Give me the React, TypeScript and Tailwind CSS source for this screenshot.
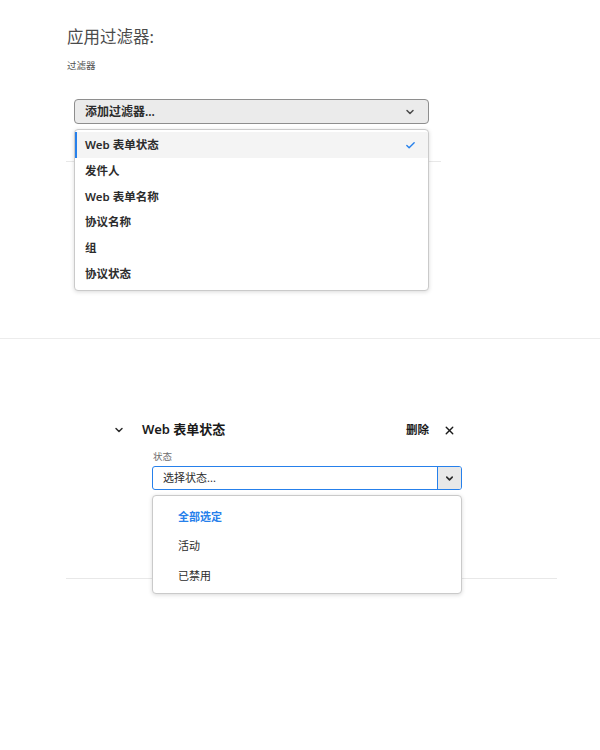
import { Check, ChevronDown, X } from "lucide-react";

const font = { fontFamily: '"Noto Sans", "Noto Sans CJK SC", sans-serif' };

const filterOptions = ["Web 表单状态", "发件人", "Web 表单名称", "协议名称", "组", "协议状态"];

function FilterMenu() {
  return (
    <div className="absolute left-[8px] top-[104px] w-[355px] rounded-[4px] border border-[#cacaca] bg-white pb-[4px] pt-[2px] shadow-[0_1px_4px_rgba(0,0,0,0.15)]">
      {filterOptions.map((opt, i) => (
        <div
          key={opt}
          className={
            i === 0
              ? "flex h-[26px] items-center justify-between border-l-2 border-[#2680eb] bg-[#f4f4f4] pl-[8px] pr-[12px]"
              : "flex h-[25.6px] items-center justify-between pl-[10px] pr-[12px]"
          }
        >
          <span className="text-[11.5px] font-semibold text-[#2c2c2c]">{opt}</span>
          {i === 0 && <Check className="h-[11px] w-[11px] text-[#2680eb]" strokeWidth={3} />}
        </div>
      ))}
    </div>
  );
}

function StatusMenu() {
  return (
    <div className="absolute left-[86px] top-[77px] w-[310px] rounded-[4px] border border-[#cacaca] bg-white pb-[2px] pt-[6px] shadow-[0_1px_4px_rgba(0,0,0,0.15)]">
      <div className="flex h-[29.5px] items-center pl-[25px] text-[11px] font-semibold text-[#2680eb]">全部选定</div>
      <div className="flex h-[29.5px] items-center pl-[25px] text-[11px] text-[#2c2c2c]">活动</div>
      <div className="flex h-[29.5px] items-center pl-[25px] text-[11px] text-[#2c2c2c]">已禁用</div>
    </div>
  );
}

export default function App() {
  return (
    <div className="min-h-[750px] bg-white" style={font}>
      <section className="pl-[66px] pt-[25px]">
        <div className="relative w-[375px] border-b border-[#e8e8e8] pb-[37px]">
          <h2 className="pl-[1px] text-[16.5px] leading-[24px] text-[#4b4b4b]">应用过滤器:</h2>
          <div className="mt-[10px] pl-[1px] text-[9.5px] leading-[14px] text-[#505050]">过滤器</div>
          <button className="ml-[8px] mt-[26px] flex h-[25px] w-[355px] items-center justify-between rounded-[4px] border border-[#8e8e8e] bg-[#ebebeb] pl-[10px] pr-[12px]">
            <span className="text-[12px] font-semibold text-[#2c2c2c]">添加过滤器...</span>
            <ChevronDown className="h-[12px] w-[12px] text-[#4b4b4b]" strokeWidth={3} />
          </button>
          <FilterMenu />
        </div>
      </section>

      <div className="mt-[176px] h-px bg-[#ececec]" />

      <section className="pl-[66px] pt-[79px]">
        <div className="relative w-[491px] border-b border-[#e8e8e8] pb-[88px]">
          <div className="flex h-[24px] items-center pl-[47px] pr-[101px]">
            <ChevronDown className="h-[12px] w-[12px] text-[#2c2c2c]" strokeWidth={3} />
            <span className="ml-[17px] text-[13px] font-semibold text-[#1a1a1a]">Web 表单状态</span>
            <span className="ml-auto text-[11.5px] font-semibold text-[#1a1a1a]">删除</span>
            <X className="ml-[14px] h-[13px] w-[13px] text-[#1a1a1a]" strokeWidth={2.5} />
          </div>
          <div className="mt-[9px] pl-[87px] text-[9.5px] leading-[12px] text-[#6e6e6e]">状态</div>
          <div className="ml-[86px] mt-[3px] flex h-[24px] w-[310px] items-stretch overflow-hidden rounded-[3px] border border-[#2680eb] bg-white">
            <span className="flex flex-1 items-center pl-[10px] text-[11px] text-[#2c2c2c]">选择状态...</span>
            <span className="flex w-[24px] items-center justify-center border-l border-[#2680eb] bg-[#e8e8e8]">
              <ChevronDown className="h-[11px] w-[11px] text-[#2c2c2c]" strokeWidth={3.5} />
            </span>
          </div>
          <StatusMenu />
        </div>
      </section>
    </div>
  );
}
